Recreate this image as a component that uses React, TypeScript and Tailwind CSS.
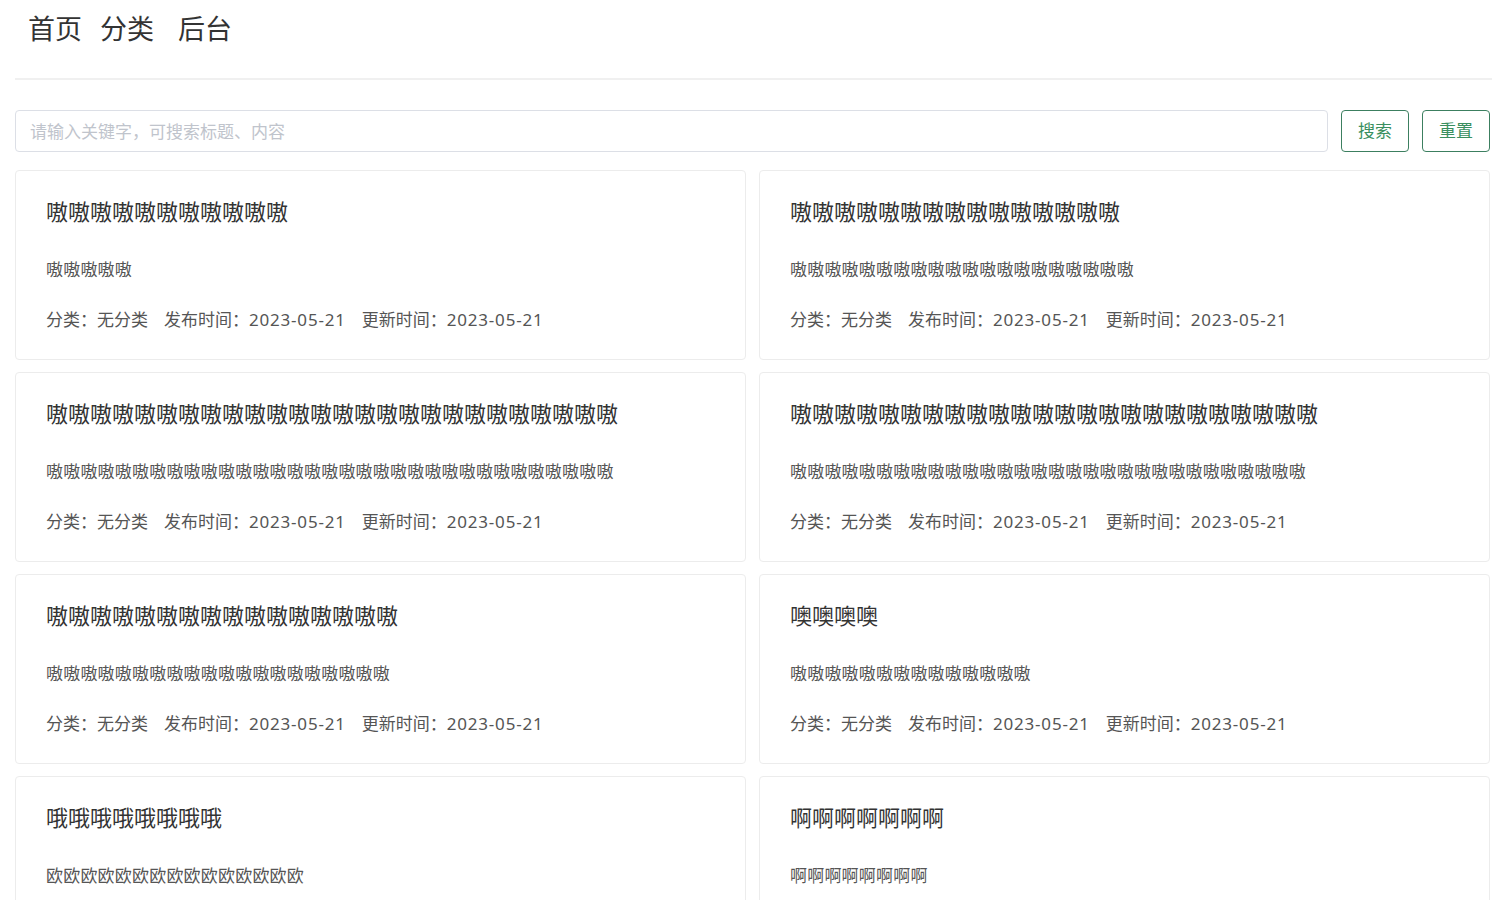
import React from "react"

type Post = {
  title: string
  excerpt: string
}

const posts: Post[] = [
  { title: "嗷嗷嗷嗷嗷嗷嗷嗷嗷嗷嗷", excerpt: "嗷嗷嗷嗷嗷" },
  { title: "嗷嗷嗷嗷嗷嗷嗷嗷嗷嗷嗷嗷嗷嗷嗷", excerpt: "嗷嗷嗷嗷嗷嗷嗷嗷嗷嗷嗷嗷嗷嗷嗷嗷嗷嗷嗷嗷" },
  {
    title: "嗷嗷嗷嗷嗷嗷嗷嗷嗷嗷嗷嗷嗷嗷嗷嗷嗷嗷嗷嗷嗷嗷嗷嗷嗷嗷",
    excerpt: "嗷嗷嗷嗷嗷嗷嗷嗷嗷嗷嗷嗷嗷嗷嗷嗷嗷嗷嗷嗷嗷嗷嗷嗷嗷嗷嗷嗷嗷嗷嗷嗷嗷",
  },
  {
    title: "嗷嗷嗷嗷嗷嗷嗷嗷嗷嗷嗷嗷嗷嗷嗷嗷嗷嗷嗷嗷嗷嗷嗷嗷",
    excerpt: "嗷嗷嗷嗷嗷嗷嗷嗷嗷嗷嗷嗷嗷嗷嗷嗷嗷嗷嗷嗷嗷嗷嗷嗷嗷嗷嗷嗷嗷嗷",
  },
  { title: "嗷嗷嗷嗷嗷嗷嗷嗷嗷嗷嗷嗷嗷嗷嗷嗷", excerpt: "嗷嗷嗷嗷嗷嗷嗷嗷嗷嗷嗷嗷嗷嗷嗷嗷嗷嗷嗷嗷" },
  { title: "噢噢噢噢", excerpt: "嗷嗷嗷嗷嗷嗷嗷嗷嗷嗷嗷嗷嗷嗷" },
  { title: "哦哦哦哦哦哦哦哦", excerpt: "欧欧欧欧欧欧欧欧欧欧欧欧欧欧欧" },
  { title: "啊啊啊啊啊啊啊", excerpt: "啊啊啊啊啊啊啊啊" },
]

function PostCard({ post }: { post: Post }) {
  return (
    <div className="bg-white border border-[#ececec] rounded-[4px] px-[30px] pt-[28px] pb-[27px]">
      <h2 className="text-[22px] leading-[24px] text-[#333] whitespace-nowrap">{post.title}</h2>
      <p className="mt-[35px] text-[17px] leading-[24px] text-[#555] whitespace-nowrap tracking-[0.2px]">
        {post.excerpt}
      </p>
      <div className="mt-[26px] text-[17px] leading-[24px] text-[#555] whitespace-nowrap">
        <span className="mr-[16px]">分类：无分类</span>
        <span className="mr-[16px]">发布时间：<span className="tracking-[0.8px]">2023-05-21</span></span>
        <span>更新时间：<span className="tracking-[0.8px]">2023-05-21</span></span>
      </div>
    </div>
  )
}

export default function App() {
  return (
    <div
      className="min-h-screen bg-white pl-[15px] pr-[19px] overflow-hidden"
      style={{ fontFamily: '"Noto Sans", "Noto Sans CJK SC", sans-serif' }}
    >
      {/* Nav */}
      <nav className="flex items-center h-[58px] text-[27px] text-[#333] pl-[13px]">
        <a className="mr-[18px]">首页</a>
        <a className="mr-[24px]">分类</a>
        <a>后台</a>
      </nav>
      <div className="mt-[20px] h-[2px] bg-[#f0f0f0] mr-[-2px]" />

      {/* Search */}
      <div className="mt-[30px] flex gap-[13px]">
        <input
          className="flex-1 h-[42px] border border-[#dcdfe6] rounded-[4px] px-[14px] text-[17px] outline-none placeholder:text-[#c0c4cc]"
          placeholder="请输入关键字，可搜索标题、内容"
        />
        <button className="w-[68px] h-[42px] border border-[#3c7f60] rounded-[4px] text-[17px] text-[#3a8f60] bg-white">
          搜索
        </button>
        <button className="w-[68px] h-[42px] border border-[#3c7f60] rounded-[4px] text-[17px] text-[#3a8f60] bg-white">
          重置
        </button>
      </div>

      {/* Posts */}
      <div className="mt-[18px] grid grid-cols-2 gap-x-[13px] gap-y-[12px]">
        {posts.map((p, i) => (
          <PostCard key={i} post={p} />
        ))}
      </div>
    </div>
  )
}
